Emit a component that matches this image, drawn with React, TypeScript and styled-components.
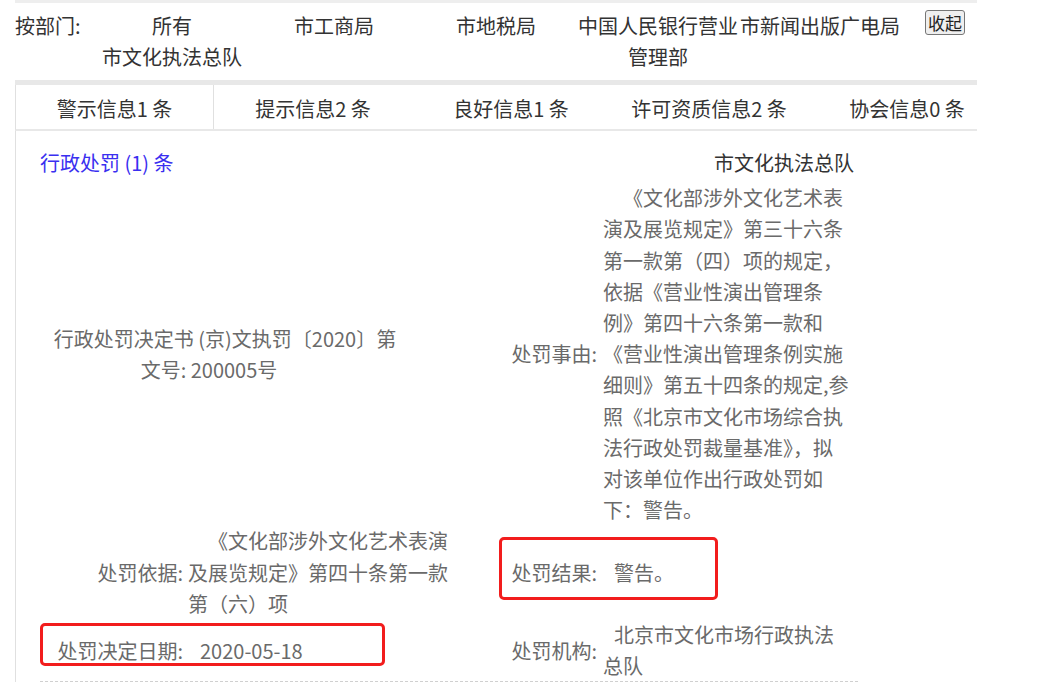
import React from "react";
import styled, { createGlobalStyle } from "styled-components";

const GlobalStyle = createGlobalStyle`
  body {
    margin: 0;
    background: #ffffff;
    font-family: "Noto Sans CJK SC", "Microsoft YaHei", sans-serif;
  }
`;

const Page = styled.div`
  margin-left: 15px;
  width: 962px;
`;

// 按部门 filter
const Filter = styled.div`
  display: flex;
  align-items: flex-start;
  border-top: 3px solid #eeeeee;
  border-bottom: 5px solid #e8e8e8;
  padding: 7px 12px 8px 0;
  font-size: 20px;
  line-height: 31px;
  color: #333;
`;

const FilterLabel = styled.div`
  flex: none;
  width: 76px;
`;

const DeptGrid = styled.div`
  display: grid;
  grid-template-columns: repeat(5, 162px);
  grid-auto-rows: 31px;
  text-align: center;
`;

const Dept = styled.div<{ $rows?: number }>`
  grid-row: span ${(p) => p.$rows ?? 1};
  cursor: pointer;
`;

const FoldButton = styled.button`
  margin-left: auto;
  font-family: inherit;
  font-size: 17px;
  line-height: 23px;
  padding: 0 2px;
  color: #222;
  background: #efefef;
  border: 1px solid #767676;
  border-radius: 3px;
`;

// tabs
const Tabs = styled.div`
  display: flex;
  overflow: hidden;
  border-left: 1px solid #e0e0e0;
  border-bottom: 2px solid #e8e8e8;
`;

const Tab = styled.div<{ $active?: boolean }>`
  flex: 0 0 198px;
  box-sizing: border-box;
  height: 44px;
  line-height: 47px;
  text-align: center;
  font-size: 20px;
  color: #333;
  border-right: ${(p) => (p.$active ? "1px solid #e0e0e0" : "none")};
`;

// record
const Content = styled.div`
  border-left: 1px solid #e0e0e0;
  padding: 16px 0 0 24px;
  font-size: 20px;
  line-height: 31.2px;
`;

const Header = styled.div`
  display: flex;
  justify-content: space-between;
  width: 814px;
  margin-bottom: 4px;
`;

const Title = styled.span`
  color: #3a2ff0;
`;

const Agency = styled.span`
  color: #333;
`;

const Row = styled.div<{ $last?: boolean }>`
  display: grid;
  width: 818px;
  grid-template-columns: 459px 359px;
  color: #6a6a6a;
  border-bottom: ${(p) => (p.$last ? "1px dashed #d0d0d0" : "none")};
`;

const Cell = styled.div`
  position: relative;
  display: flex;
  align-items: center;
`;

const Pair = styled.div<{ $label: number; $value: number; $gap: number }>`
  display: grid;
  grid-template-columns: ${(p) => `${p.$label}px ${p.$value}px`};
  column-gap: ${(p) => p.$gap}px;
  align-items: center;
`;

const Label = styled.div`
  text-align: right;
  white-space: nowrap;
`;

const Value = styled.div<{ $indent?: number }>`
  text-indent: ${(p) => p.$indent ?? 0}px;
`;

const DocNo = styled.div`
  width: 370px;
  text-align: center;
`;

const DocLine = styled.div<{ $shift?: number }>`
  padding-right: ${(p) => p.$shift ?? 0}px;
`;

const Highlight = styled.div<{ $top: number; $w: number; $h: number }>`
  position: absolute;
  left: 0;
  top: ${(p) => p.$top}px;
  width: ${(p) => p.$w}px;
  height: ${(p) => p.$h}px;
  box-sizing: border-box;
  border: 3px solid #f21d1d;
  border-radius: 5px;
  pointer-events: none;
`;

const LeftPair = ({ label, children, indent }: { label: string; children: React.ReactNode; indent?: number }) => (
  <Pair $label={143} $value={265} $gap={5}>
    <Label>{label}</Label>
    <Value $indent={indent}>{children}</Value>
  </Pair>
);

const RightPair = ({ label, children, indent }: { label: string; children: React.ReactNode; indent?: number }) => (
  <Pair $label={98} $value={248} $gap={6}>
    <Label>{label}</Label>
    <Value $indent={indent}>{children}</Value>
  </Pair>
);

const depts = [
  { name: "所有" },
  { name: "市工商局" },
  { name: "市地税局" },
  { name: "中国人民银行营业管理部", rows: 2 },
  { name: "市新闻出版广电局" },
  { name: "市文化执法总队" },
];

const tabs = ["警示信息1 条", "提示信息2 条", "良好信息1 条", "许可资质信息2 条", "协会信息0 条"];

export default function App() {
  return (
    <>
      <GlobalStyle />
      <Page>
        <Filter>
          <FilterLabel>按部门:</FilterLabel>
          <DeptGrid>
            {depts.map((d) => (
              <Dept key={d.name} $rows={d.rows}>
                {d.name}
              </Dept>
            ))}
          </DeptGrid>
          <FoldButton>收起</FoldButton>
        </Filter>

        <Tabs>
          {tabs.map((t, i) => (
            <Tab key={t} $active={i === 0}>
              {t}
            </Tab>
          ))}
        </Tabs>

        <Content>
          <Header>
            <Title>行政处罚 (1) 条</Title>
            <Agency>市文化执法总队</Agency>
          </Header>

          <Row>
            <Cell>
              <DocNo>
                <DocLine>行政处罚决定书 (京)文执罚〔2020〕第</DocLine>
                <DocLine $shift={32}>文号: 200005号</DocLine>
              </DocNo>
            </Cell>
            <Cell>
              <RightPair label="处罚事由:" indent={20}>
                《文化部涉外文化艺术表演及展览规定》第三十六条第一款第（四）项的规定，依据《营业性演出管理条例》第四十六条第一款和《营业性演出管理条例实施细则》第五十四条的规定,参照《北京市文化市场综合执法行政处罚裁量基准》，拟对该单位作出行政处罚如下：警告。
              </RightPair>
            </Cell>
          </Row>

          <Row>
            <Cell>
              <LeftPair label="处罚依据:" indent={20}>
                《文化部涉外文化艺术表演及展览规定》第四十条第一款第（六）项
              </LeftPair>
            </Cell>
            <Cell>
              <RightPair label="处罚结果:" indent={11}>
                警告。
              </RightPair>
              <Highlight $top={12} $w={219} $h={63} />
            </Cell>
          </Row>

          <Row $last>
            <Cell>
              <LeftPair label="处罚决定日期:" indent={12}>
                2020-05-18
              </LeftPair>
              <Highlight $top={4} $w={345} $h={43} />
            </Cell>
            <Cell>
              <RightPair label="处罚机构:" indent={11}>
                北京市文化市场行政执法总队
              </RightPair>
            </Cell>
          </Row>
        </Content>
      </Page>
    </>
  );
}
